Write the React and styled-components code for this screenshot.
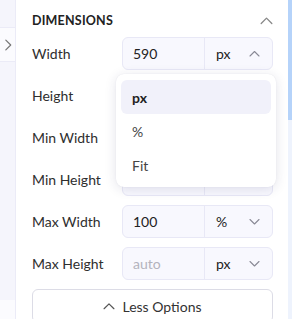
import React from "react";
import styled, { createGlobalStyle } from "styled-components";

const GlobalStyle = createGlobalStyle`
  html, body { margin: 0; padding: 0; background: #ffffff; }
  body { font-family: Lato, "Noto Sans", sans-serif; color: #2a2a2a; }
`;

const Page = styled.div`
  display: flex;
  width: 292px;
  height: 319px;
  overflow: hidden;
`;

const Strip = styled.div`
  width: 15px;
  flex-shrink: 0;
  display: flex;
  flex-direction: column;
  border-right: 1px solid #ebebf7;
`;

const StripBlock = styled.div`
  height: ${({ h }) => h}px;
  flex-shrink: 0;
  background: ${({ light }) => (light ? "#fbfbfe" : "#f5f5fc")};
  border-bottom: ${({ line }) => (line ? "1px solid #ebebf7" : "none")};
  display: flex;
  align-items: center;
  justify-content: center;
`;

const Panel = styled.div`
  flex: 1;
  padding: 10px 15px 0 16px;
  position: relative;
`;

const Scrollbar = styled.div`
  width: 4px;
  flex-shrink: 0;
  background: #eef3fd;
  display: flex;
  flex-direction: column;
`;

const Thumb = styled.div`
  height: 120px;
  background: #b5d3fa;
`;

const Header = styled.div`
  display: flex;
  align-items: center;
  justify-content: space-between;
  height: 20px;
  margin-bottom: 7px;
`;

const Title = styled.div`
  font-size: 12.5px;
  font-weight: 700;
  letter-spacing: 0.2px;
  color: #222;
`;

const Rows = styled.div`
  display: flex;
  flex-direction: column;
  gap: 9px;
`;

const Row = styled.div`
  display: flex;
  align-items: center;
  height: 33px;
`;

const Label = styled.div`
  width: 90px;
  font-size: 14px;
  color: #2e2e2e;
`;

const Field = styled.div`
  flex: 1;
  display: flex;
  height: 33px;
  box-sizing: border-box;
  border: 1px solid #e8e8f6;
  border-radius: 6px;
  background: #f8f8fe;
  position: relative;
`;

const Value = styled.div`
  width: 82px;
  box-sizing: border-box;
  padding-left: 10px;
  display: flex;
  align-items: center;
  font-size: 14px;
  color: ${({ placeholder }) => (placeholder ? "#b3b3bd" : "#222")};
  border-right: 1px solid #e8e8f6;
`;

const Unit = styled.div`
  flex: 1;
  display: flex;
  align-items: center;
  justify-content: space-between;
  padding: 0 12px 0 11px;
  font-size: 14px;
  color: #222;
`;

const Menu = styled.div`
  position: absolute;
  left: 100px;
  top: 74px;
  width: 160px;
  box-sizing: border-box;
  padding: 6px 5px 5px;
  background: #fff;
  border-radius: 8px;
  box-shadow: 0 2px 12px rgba(40, 40, 90, 0.13), 0 0 1px rgba(40, 40, 90, 0.12);
  display: flex;
  flex-direction: column;
  z-index: 2;
`;

const Option = styled.div`
  height: 34px;
  display: flex;
  align-items: center;
  padding-left: 11px;
  border-radius: 6px;
  font-size: 14px;
  font-weight: ${({ active }) => (active ? 700 : 400)};
  color: ${({ active }) => (active ? "#222" : "#444")};
  background: ${({ active }) => (active ? "#f1f1fa" : "transparent")};
`;

const LessButton = styled.div`
  margin-top: 9px;
  height: 34px;
  box-sizing: border-box;
  border: 1px solid #dcdce6;
  border-radius: 6px;
  background: #fff;
  display: flex;
  align-items: center;
  justify-content: center;
  gap: 7px;
  font-size: 14px;
  color: #333;
`;

const Chevron = ({ dir = "down", size = 11, color = "#8a8a96" }) => {
  const d = {
    down: "M1 3.5 L5.5 8 L10 3.5",
    up: "M1 8 L5.5 3.5 L10 8",
    right: "M3.5 1 L8 5.5 L3.5 10",
  }[dir];
  return (
    <svg width={size} height={size} viewBox="0 0 11 11" fill="none">
      <path d={d} stroke={color} strokeWidth="1.1" strokeLinecap="round" strokeLinejoin="round" />
    </svg>
  );
};

const rows = [
  { label: "Width", value: "590", unit: "px", open: true },
  { label: "Height", value: "", unit: "px" },
  { label: "Min Width", value: "", unit: "px" },
  { label: "Min Height", value: "", unit: "px" },
  { label: "Max Width", value: "100", unit: "%" },
  { label: "Max Height", value: "auto", unit: "px", placeholder: true },
];

export default function App() {
  return (
    <Page>
      <GlobalStyle />
      <Strip>
        <StripBlock h={27} line />
        <StripBlock h={33} light line>
          <Chevron dir="right" size={12} color="#777" />
        </StripBlock>
        <StripBlock h={238} />
        <StripBlock h={21} light />
      </Strip>
      <Panel>
        <Header>
          <Title>DIMENSIONS</Title>
          <Chevron dir="up" size={13} color="#888" />
        </Header>
        <Rows>
          {rows.map((r) => (
            <Row key={r.label}>
              <Label>{r.label}</Label>
              <Field>
                <Value placeholder={r.placeholder}>{r.value}</Value>
                <Unit>
                  <span>{r.unit}</span>
                  <Chevron dir={r.open ? "up" : "down"} />
                </Unit>
              </Field>
            </Row>
          ))}
        </Rows>
        <Menu>
          <Option active>px</Option>
          <Option>%</Option>
          <Option>Fit</Option>
        </Menu>
        <LessButton>
          <Chevron dir="up" size={12} color="#555" />
          <span>Less Options</span>
        </LessButton>
      </Panel>
      <Scrollbar>
        <Thumb />
      </Scrollbar>
    </Page>
  );
}
